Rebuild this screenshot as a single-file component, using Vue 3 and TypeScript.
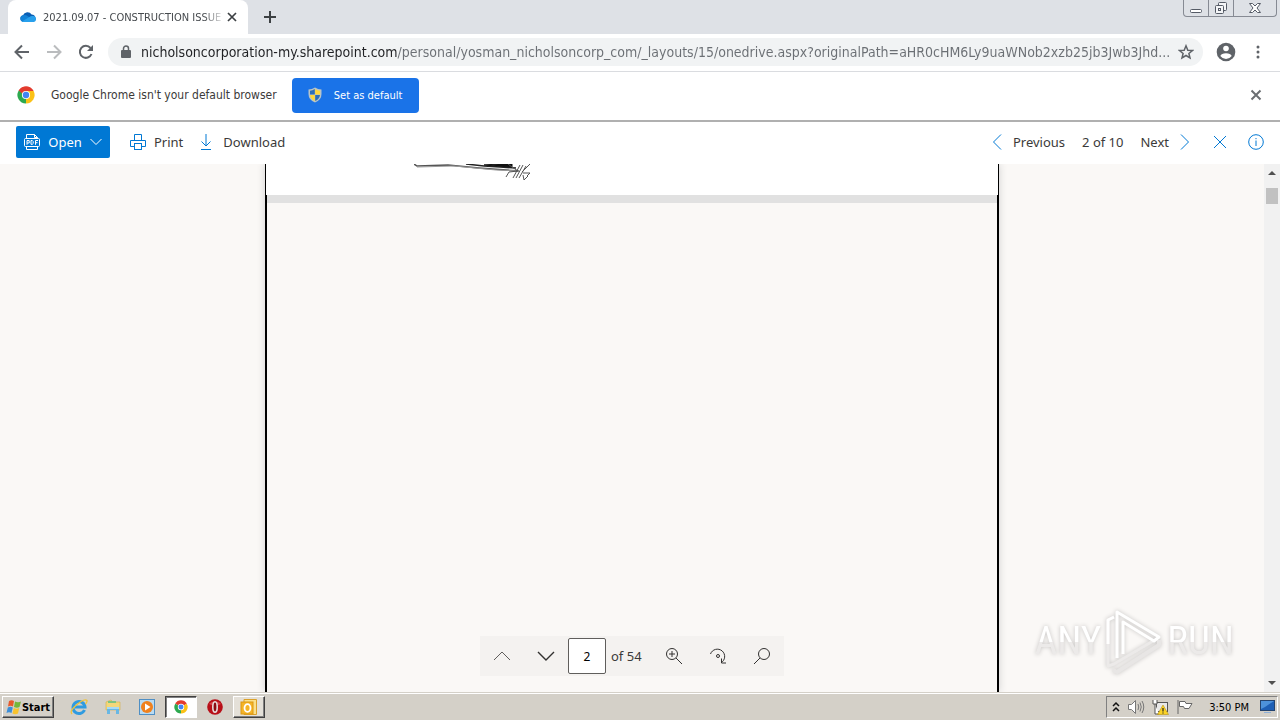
<script setup lang="ts">
import { ref } from 'vue'

const address = ref(
  'nicholsoncorporation-my.sharepoint.com/personal/yosman_nicholsoncorp_com/_layouts/15/onedrive.aspx?originalPath=aHR0cHM6Ly9uaWNob2xzb25jb3Jwb3Jhd...'
)
const page = ref('2')
</script>

<template>
  <div class="screen">
    <header class="tabstrip">
      <div class="tab">
        <svg class="cloud" viewBox="0 0 16 12" aria-hidden="true">
          <path d="M3.5 11A3.4 3.4 0 0 1 3 4.300A4.800 4.800 0 0 1 11.600 3.500A3.900 3.900 0 0 1 13 11Z" fill="#0a5fb4" />
          <path d="M3 4.300Q5.500 3.500 7.500 5L12.500 8.500L3.500 11A3.400 3.400 0 0 1 3 4.300Z" fill="#1382d6" />
          <path d="M2 10.500L9 6.200Q11 4.500 13.200 5A3 3 0 0 1 13 11H4Q2.800 11 2 10.500Z" fill="#28a0ec" />
        </svg>
        <span class="tab-title">2021.09.07 - CONSTRUCTION ISSUE</span>
        <button class="icon-btn tab-close" aria-label="Close tab">
          <svg width="10" height="10" viewBox="0 0 10 10"><path d="M1 1L9 9M9 1L1 9" stroke="#3c4043" stroke-width="1.700" /></svg>
        </button>
      </div>
      <button class="icon-btn new-tab" aria-label="New tab">
        <svg width="14" height="14" viewBox="0 0 14 14"><path d="M7 1V13M1 7H13" stroke="#3c4043" stroke-width="2" /></svg>
      </button>
      <div class="window-buttons">
        <button aria-label="Minimize"><svg width="14" height="14" viewBox="0 0 14 14"><rect x="1.500" y="8.500" width="11" height="3" rx="1" fill="#fff" stroke="#555b66" /></svg></button>
        <button aria-label="Restore"><svg width="14" height="14" viewBox="0 0 14 14" fill="#f4f5f7" stroke="#555b66"><rect x="4.500" y="1.500" width="8" height="8" rx="1" /><rect x="1.500" y="4.500" width="8" height="8" rx="1" /><rect x="4.500" y="7.500" width="2" height="2" /></svg></button>
        <button class="wide" aria-label="Close"><svg width="14" height="14" viewBox="0 0 14 14"><path d="M1.500 2.500H4.500L7 5L9.500 2.500H12.500L9 7L12.500 11.500H9.500L7 9L4.500 11.500H1.500L5 7Z" fill="#fff" stroke="#555b66" /></svg></button>
      </div>
    </header>

    <nav class="toolbar">
      <button class="icon-btn nav" aria-label="Back">
        <svg width="16" height="16" viewBox="0 0 16 16" fill="none" stroke="#5f6368" stroke-width="2"><path d="M15 8H2M8 1.500L1.500 8L8 14.500" /></svg>
      </button>
      <button class="icon-btn nav" aria-label="Forward">
        <svg width="16" height="16" viewBox="0 0 16 16" fill="none" stroke="#babcbe" stroke-width="2"><path d="M1 8H14M8 1.500L14.500 8L8 14.500" /></svg>
      </button>
      <button class="icon-btn nav" aria-label="Reload">
        <svg width="16" height="16" viewBox="0 0 16 16"><path d="M13.500 10A6 6 0 1 1 12.500 4" fill="none" stroke="#5f6368" stroke-width="2" /><path d="M15 1V7H9Z" fill="#5f6368" /></svg>
      </button>
      <div class="omnibox">
        <svg width="12" height="14" viewBox="0 0 12 14"><rect x="1" y="5" width="10" height="8" rx="1" fill="#5f6368" /><path d="M3.500 6V3.500A2.500 2.500 0 0 1 8.500 3.500V6" fill="none" stroke="#5f6368" stroke-width="1.500" /></svg>
        <input v-model="address" class="address" type="text" aria-label="Address" spellcheck="false" />
        <button class="icon-btn star" aria-label="Bookmark">
          <svg width="16" height="16" viewBox="0 0 16 16"><path d="M8 1.800L9.800 6.200L14.500 6.500L10.900 9.500L12 14L8 11.500L4 14L5.100 9.500L1.500 6.500L6.200 6.200Z" fill="none" stroke="#5f6368" stroke-width="1.500" /></svg>
        </button>
      </div>
      <button class="icon-btn profile" aria-label="Profile">
        <svg width="20" height="20" viewBox="0 0 20 20"><circle cx="10" cy="10" r="9.300" fill="#5f6368" /><circle cx="10" cy="6.500" r="2.800" fill="#fff" /><path d="M4.300 14Q5.500 11.300 10 11.300T15.700 14Q13.500 17 10 17T4.300 14Z" fill="#fff" /></svg>
      </button>
      <button class="icon-btn menu" aria-label="Menu">
        <svg width="4" height="14" viewBox="0 0 4 14" fill="#5f6368"><circle cx="2" cy="2" r="1.500" /><circle cx="2" cy="7" r="1.500" /><circle cx="2" cy="12" r="1.500" /></svg>
      </button>
    </nav>

    <section class="infobar">
      <svg class="chrome-logo" viewBox="0 0 18 18" aria-hidden="true">
        <path d="M9 9L1.600 4.700A8.500 8.500 0 0 1 16.400 4.700Z" fill="#e33b2e" />
        <path d="M9 9L16.400 4.700A8.500 8.500 0 0 1 9 17.500Z" fill="#fbc116" />
        <path d="M9 9L9 17.500A8.500 8.500 0 0 1 1.600 4.700Z" fill="#2da94f" />
        <path d="M9 5H16.500L15 9L12.500 11Z" fill="#fbc116" /><path d="M1.600 4.700L5.500 11L9 9L6 4Z" fill="#2da94f" /><path d="M1.800 4.500L5.500 8L9 5H16.500A8.500 8.500 0 0 0 1.800 4.500Z" fill="#e33b2e" />
        <circle cx="9" cy="9" r="4.100" fill="#fff" /><circle cx="9" cy="9" r="3.200" fill="#4285f4" />
      </svg>
      <span class="info-text">Google Chrome isn't your default browser</span>
      <button class="default-btn">
        <svg width="14" height="16" viewBox="0 0 14 16" aria-hidden="true">
          <path d="M7 0.500Q10 2.500 13.500 2.500V7Q13.500 13 7 15.500Q0.500 13 0.500 7V2.500Q4 2.500 7 0.500Z" fill="#b8c4c8" />
          <path d="M6.800 2Q4.500 3.500 2 3.700V7.500H6.800Z" fill="#2d6fb8" /><path d="M7.200 2Q9.500 3.500 12 3.700V7.500H7.200Z" fill="#ffd83a" />
          <path d="M2 7.900H6.800V14Q2.500 12 2 7.900Z" fill="#ffd83a" /><path d="M7.200 7.900H12Q11.500 12 7.200 14Z" fill="#2d6fb8" />
        </svg>
        <span>Set as default</span>
      </button>
      <button class="icon-btn info-close" aria-label="Dismiss">
        <svg width="12" height="12" viewBox="0 0 12 12"><path d="M1.500 1.500L10.500 10.500M10.500 1.500L1.500 10.500" stroke="#6b6e72" stroke-width="2" /></svg>
      </button>
    </section>

    <section class="commands">
      <button class="open-btn">
        <svg width="16" height="16" viewBox="0 0 16 16" fill="none" stroke="#fff"><path d="M2.500 4.500V.500H10.500L13.500 3.500V4.500M10.500 .500V3.500H13.500M2.500 12V15.500H13.500V12" /><rect x=".500" y="4.500" width="15" height="8" rx="1" /><path d="M3 10.800V6.500H5.200V9H3M7 6.500V10.300H8.300L9.200 9.500V7.500L8.300 6.500ZM11.500 10.800V6.500H14M11.500 8.700H13.500" /></svg>
        <span>Open</span>
        <svg width="12" height="8" viewBox="0 0 12 8"><path d="M.500 1L6 6.500L11.500 1" fill="none" stroke="#fff" /></svg>
      </button>
      <button class="cmd print">
        <svg width="16" height="16" viewBox="0 0 16 16" fill="none" stroke="#0078d4"><path d="M4.500 6.500V.500H11.500V6.500M4.500 12.500H.500V6.500H15.500V12.500H11.500" /><rect x="4.500" y="9.500" width="7" height="6" /></svg>
        <span>Print</span>
      </button>
      <button class="cmd spaced">
        <svg width="12" height="16" viewBox="0 0 12 16" fill="none" stroke="#0078d4"><path d="M6 0V12M1.500 7.500L6 12L10.500 7.500M1 15.500H11" /></svg>
        <span>Download</span>
      </button>
      <div class="pager">
        <button class="cmd spaced">
          <svg width="10" height="16" viewBox="0 0 10 16"><path d="M9 .500L1.500 8L9 15.500" fill="none" stroke="#0078d4" /></svg>
          <span>Previous</span>
        </button>
        <span class="count">2 of 10</span>
        <button class="cmd spaced">
          <span>Next</span>
          <svg width="10" height="16" viewBox="0 0 10 16"><path d="M1 .500L8.500 8L1 15.500" fill="none" stroke="#0078d4" /></svg>
        </button>
      </div>
      <button class="icon-btn square" aria-label="Close file">
        <svg width="14" height="14" viewBox="0 0 14 14"><path d="M1 1L13 13M13 1L1 13" stroke="#0078d4" /></svg>
      </button>
      <button class="icon-btn info" aria-label="Information">
        <svg width="16" height="16" viewBox="0 0 16 16"><circle cx="8" cy="8" r="7.300" fill="none" stroke="#0078d4" /><path d="M8 6.500V12M8 4V5.200" stroke="#0078d4" /></svg>
      </button>
    </section>

    <main class="viewer">
      <div class="canvas">
        <div class="sheets">
          <div class="sheet-end">
            <svg class="sketch" width="120" height="20" viewBox="0 0 120 20" fill="none" stroke="#333" aria-hidden="true">
              <path d="M0 0L3 2L34 1L65 4L105 7" stroke="#555" stroke-width="1.500" />
              <path d="M3 3L40 2L82 6L105 7" stroke="#999" />
              <path d="M52 0L70 2L86 3L102 4" stroke="#222" stroke-width="1.500" />
              <path d="M70 1L82 2L98 3V0H84Z" fill="#111" stroke="#111" />
              <path d="M92 13L95 8L104 7L98 3L94 0M99 14L106 1M102 14L109 1M105 14L112 2M108 8L116 0M109 9H116L113 12M109 11L110 16L114 12" stroke="#555" />
            </svg>
          </div>
          <div class="gap"></div>
          <div class="sheet"></div>
        </div>
        <div class="page-tools">
          <button aria-label="Previous page"><svg width="18" height="10" viewBox="0 0 18 10"><path d="M1 9L9 1L17 9" fill="none" stroke="#605e5c" /></svg></button>
          <button aria-label="Next page"><svg width="18" height="10" viewBox="0 0 18 10"><path d="M1 1L9 9L17 1" fill="none" stroke="#323130" stroke-width="1.400" /></svg></button>
          <input v-model="page" type="text" aria-label="Page number" />
          <span>of 54</span>
          <button aria-label="Zoom in"><svg width="18" height="18" viewBox="0 0 18 18" fill="none" stroke="#323130"><circle cx="7" cy="7" r="5.500" /><path d="M11 11L17 17M4 7H10M7 4V10" /></svg></button>
          <button aria-label="Rotate"><svg width="18" height="18" viewBox="0 0 18 18" fill="none" stroke="#323130"><path d="M1.500 7A7.300 7.300 0 1 1 12 15.800M12.500 11.500V16H17" /><circle cx="9" cy="9" r="1.500" /></svg></button>
          <button aria-label="Search"><svg width="18" height="18" viewBox="0 0 18 18" fill="none" stroke="#323130"><circle cx="11" cy="7" r="5.500" /><path d="M7 11L1 17" /></svg></button>
        </div>
      </div>
      <div class="scrollbar" aria-hidden="true">
        <svg width="8" height="18" viewBox="0 0 8 18"><path d="M0 11L4 7L8 11Z" fill="#505050" /></svg>
        <div class="thumb"></div>
        <svg class="down" width="8" height="18" viewBox="0 0 8 18"><path d="M0 7L4 11L8 7Z" fill="#505050" /></svg>
      </div>
      <div class="watermark">
        <span>ANY</span>
        <svg width="58" height="66" viewBox="0 0 58 66" aria-hidden="true" fill="none" stroke-linejoin="round">
          <path d="M8 62L12 64L54 37V32" stroke="#e8e6e5" stroke-width="4" />
          <path d="M9 9L3 12V58L9 56L48 33" stroke="#eceae9" stroke-width="3" />
          <path d="M9 9L3 12V36" stroke="#fff" stroke-width="3" />
          <path d="M12 50V4L54 29L49 33L18 14V46" stroke="#fff" stroke-width="3" />
        </svg>
        <span>RUN</span>
      </div>
    </main>

    <footer class="taskbar">
      <button class="start">
        <svg width="16" height="16" viewBox="0 0 16 16" aria-hidden="true"><path d="M3 2Q5.500 .500 8 2L7 7.500Q4.500 6 2 7.500Z" fill="#e8592b" /><path d="M9 2.500Q12 4 15 2.500L13.500 8Q11 9.500 8 8Z" fill="#75b73b" /><path d="M1.800 8.500Q4.500 7 6.800 8.500L5.500 14Q3 12.500 .500 14Z" fill="#3c8ed8" /><path d="M7.800 9Q10.500 10.500 13.200 9L12 14.500Q9 16 6.500 14.500Z" fill="#f8c32d" /></svg>
        <span>Start</span>
      </button>
      <div class="apps">
        <button aria-label="Internet Explorer"><svg width="18" height="18" viewBox="0 0 18 18" fill="none"><path d="M14.500 12A6 6 0 1 1 15 9H5" stroke="#2f9be0" stroke-width="3" /><path d="M2 16Q-1 13 7 6.500T17 2.500Q17.500 4 15.500 6" stroke="#f0c33a" stroke-width="1.300" /></svg></button>
        <button aria-label="File Explorer"><svg width="18" height="18" viewBox="0 0 18 18"><path d="M2 4L7 2L9 4H16V12H2Z" fill="#f3d77a" stroke="#d3ae4b" stroke-width=".600" /><rect x="4" y="3" width="8" height="2" fill="#7ec480" /><path d="M3 9H15V16H12V12H6V16H3Z" fill="#69b7e4" /><path d="M3 9H15V11H3Z" fill="#a6daf5" /></svg></button>
        <button aria-label="Media Player"><svg width="18" height="18" viewBox="0 0 18 18"><rect x="1.500" y="1.500" width="15" height="15" fill="#b9dbf2" stroke="#4f8fc4" /><circle cx="9" cy="9" r="6" fill="#f0811d" /><path d="M7 5.500L12.500 9L7 12.500Z" fill="#fff" /></svg></button>
        <button class="active" aria-label="Chrome"><svg width="14" height="14" viewBox="0 0 18 18"><path d="M9 9L1.600 4.700A8.500 8.500 0 0 1 16.400 4.700Z" fill="#e33b2e" /><path d="M9 9L16.400 4.700A8.500 8.500 0 0 1 9 17.500Z" fill="#fbc116" /><path d="M9 9L9 17.500A8.500 8.500 0 0 1 1.600 4.700Z" fill="#2da94f" /><circle cx="9" cy="9" r="4.100" fill="#fff" /><circle cx="9" cy="9" r="3.200" fill="#4285f4" /></svg></button>
        <button aria-label="Opera"><svg width="18" height="18" viewBox="0 0 18 18"><circle cx="9" cy="9" r="7.800" fill="#b80f18" /><path d="M3 6A7 5 0 0 1 15 6Q9 9 3 6Z" fill="#d8434b" /><ellipse cx="9" cy="9" rx="2.200" ry="5.200" fill="#8c0a12" stroke="#e6dddc" stroke-width="1.600" /></svg></button>
        <button class="raised" aria-label="Outlook"><svg width="18" height="18" viewBox="0 0 18 18"><path d="M4 1.500H16.500V16.500H4Z" fill="#fbe08a" stroke="#dba12a" /><rect x="1" y="4" width="12" height="12" fill="#f5b427" stroke="#dc9713" /><ellipse cx="7.500" cy="10" rx="3" ry="3.800" fill="none" stroke="#fff" stroke-width="1.800" /></svg></button>
      </div>
      <div class="tray">
        <svg width="8" height="12" viewBox="0 0 8 12" fill="none" stroke="#111" stroke-width="1.500"><path d="M1 5L4 2L7 5M1 10L4 7L7 10" /></svg>
        <svg class="sound" width="18" height="16" viewBox="0 0 18 16" fill="#fff" stroke="#777"><path d="M1.500 5.500H4.500L8.500 1.500V14.500L4.500 10.500H1.500Z" /><path d="M11 5Q12.500 8 11 11M13 3.500Q15.500 8 13 12.500M15 2Q18.500 8 15 14" fill="none" /></svg>
        <svg width="17" height="16" viewBox="0 0 17 16"><rect x="4.500" y="3.500" width="11" height="9" fill="#e8e8e8" stroke="#555" /><path d="M1 1V5H5V1M3 5V15H7" fill="#fff" stroke="#555" /><path d="M11 6L16.500 15.500H5.500Z" fill="#fbd325" stroke="#b99310" stroke-width=".600" /><path d="M11 9V12.500M11 13.500V14.500" stroke="#222" stroke-width="1.200" /></svg>
        <svg width="18" height="16" viewBox="0 0 18 16" fill="#fff" stroke="#666"><path d="M2 1V15" /><path d="M3.500 2.500H9L10 4.500H16L13 9.500H8.500L7.500 7.500H3.500Z" /></svg>
        <time>3:50 PM</time>
        <button class="desktop" aria-label="Show desktop"><svg width="15" height="14" viewBox="0 0 15 14"><rect x=".500" y=".500" width="14" height="10" fill="#1e5fb5" stroke="#24446f" /><path d="M1 1H14L5 7L1 9Z" fill="#4d92db" /><rect x="4" y="12" width="7" height="1" fill="#8eb0d8" /></svg></button>
      </div>
    </footer>
  </div>
</template>

<style>
body {
  margin: 0;
}
</style>

<style scoped>
.screen {
  display: flex;
  flex-direction: column;
  height: 100vh;
  overflow: hidden;
  background: #fff;
  color: #3b3a39;
  font-family: "DejaVu Sans Condensed", "DejaVu Sans", sans-serif;
  font-size: 11px;
}
.screen * {
  box-sizing: border-box;
}
button {
  display: flex;
  align-items: center;
  justify-content: center;
  padding: 0;
  border: 0;
  background: none;
  color: inherit;
  font: inherit;
  white-space: nowrap;
}
input {
  padding: 0;
  border: 0;
  outline: 0;
  font: inherit;
}
svg {
  display: block;
  flex: none;
}
.tabstrip {
  display: flex;
  flex: none;
  height: 34px;
  padding-left: 8px;
  background: #dee1e6;
}
.tab {
  display: flex;
  align-items: center;
  width: 240px;
  padding: 0 10px 0 12px;
  border-radius: 8px 8px 0 0;
  background: #fff;
}
.cloud {
  width: 16px;
  height: 12px;
}
.tab-title {
  flex: 1;
  min-width: 0;
  margin-left: 7px;
  white-space: nowrap;
  color: #45494d;
  mask-image: linear-gradient(90deg, #000 88%, transparent 100%);
}
.tab-close {
  width: 12px;
  margin-left: 1px;
}
.new-tab {
  width: 28px;
  margin-left: 8px;
}
.window-buttons {
  display: flex;
  height: 17px;
  margin: 0 3px 0 auto;
  border: 1px solid #868a93;
  border-top: 0;
  border-radius: 0 0 4px 4px;
}
.window-buttons button {
  width: 25px;
  border-right: 1px solid #868a93;
}
.window-buttons .wide {
  width: 42px;
  border-right: 0;
}
.toolbar {
  display: flex;
  flex: none;
  align-items: center;
  height: 38px;
  padding: 0 14px 2px 6px;
  border-bottom: 1px solid #dadce0;
}
.nav {
  width: 32px;
  height: 28px;
}
.omnibox {
  display: flex;
  flex: 1;
  align-items: center;
  height: 28px;
  margin-left: 6px;
  padding: 0 8px 0 12px;
  border-radius: 14px;
  background: #f1f3f4;
}
.address {
  flex: 1;
  min-width: 0;
  height: 28px;
  margin-left: 9px;
  font-size: 14px;
  background: linear-gradient(90deg, #202124 256px, #6b6f74 256px);
  background-clip: text;
  color: transparent;
}
.star {
  width: 18px;
  margin-left: 0;
}
.profile {
  width: 24px;
  margin-left: 11px;
}
.menu {
  width: 16px;
  margin-left: 12px;
}
.infobar {
  display: flex;
  flex: none;
  align-items: center;
  height: 50px;
  padding: 0 18px 2px 17px;
  border-bottom: 2px solid #b0b0b0;
}
.chrome-logo {
  width: 18px;
  height: 18px;
}
.info-text {
  margin-left: 16px;
  font-size: 12px;
  white-space: nowrap;
}
.default-btn {
  gap: 12px;
  width: 127px;
  height: 35px;
  margin-left: 15px;
  border-radius: 4px;
  background: #1a73e8;
  color: #fff;
}
.info-close {
  margin-left: auto;
}
.commands {
  display: flex;
  flex: none;
  align-items: center;
  height: 42px;
  padding: 0 16px 2px;
  font-family: "Noto Sans", sans-serif;
  font-size: 13px;
}
.open-btn {
  gap: 8px;
  width: 94px;
  height: 32px;
  border-radius: 2px;
  background: #0078d4;
  color: #fff;
}
.cmd {
  gap: 8px;
  height: 32px;
}
.cmd.spaced {
  gap: 11px;
}
.print {
  margin: 0 17px 0 20px;
}
.pager {
  display: flex;
  align-items: center;
  gap: 17px;
  margin-left: auto;
}
.square {
  width: 32px;
  height: 32px;
  margin-left: 14px;
}
.info {
  width: 16px;
  margin-left: 12px;
}
.viewer {
  position: relative;
  display: flex;
  flex: 1;
  min-height: 0;
}
.canvas {
  position: relative;
  display: flex;
  flex: 1;
  justify-content: center;
  background: #faf8f6;
}
.sheets {
  display: flex;
  flex-direction: column;
  width: 58%;
  box-shadow: 0 0 8px #d0d0d0;
  clip-path: inset(0 -10px);
}
.sheet-end {
  height: 31px;
  padding-left: 148px;
  border: solid #000;
  border-width: 0 1px;
  background: #fff;
}
.gap {
  height: 8px;
  border: solid #000;
  border-width: 0 2px;
  background: #e1e1e1;
}
.sheet {
  flex: 1;
  border: solid #000;
  border-width: 0 2px;
  background: #faf8f6;
}
.page-tools {
  position: absolute;
  bottom: 16px;
  display: flex;
  align-items: center;
  height: 40px;
  background: #f4f2f0;
  font-family: "Noto Sans", sans-serif;
  font-size: 13px;
}
.page-tools button {
  width: 44px;
  height: 40px;
}
.page-tools input {
  width: 38px;
  height: 36px;
  border: 1px solid #605e5c;
  border-radius: 2px;
  background: #fff;
  color: #000;
  font-size: 12px;
  text-align: center;
}
.page-tools span {
  width: 46px;
  padding-left: 5px;
}
.scrollbar {
  display: flex;
  flex-direction: column;
  align-items: center;
  width: 16px;
  background: #f1f1f1;
}
.thumb {
  width: 12px;
  height: 16px;
  margin-top: 6px;
  background: #c1c1c1;
}
.down {
  margin-top: auto;
}
.watermark {
  position: absolute;
  right: 46px;
  bottom: 18px;
  display: flex;
  align-items: center;
  gap: 4px;
  color: transparent;
  font-family: "Roboto Condensed", "Liberation Sans Narrow", Roboto, sans-serif;
  font-size: 39px;
  line-height: 40px;
  filter: drop-shadow(0 0 2px #c4c2c1);
}
.watermark span {
  background: linear-gradient(#fff 52%, #eceae9 52%);
  background-clip: text;
}
.taskbar {
  display: flex;
  flex: none;
  align-items: center;
  height: 28px;
  padding: 1px 2px 0;
  border-top: 1px solid #d4d0c8;
  box-shadow: inset 0 1px #fff;
  background: #d4d0c8;
  color: #000;
}
.start {
  width: 52px;
  height: 22px;
  border: 1px solid;
  border-color: #fff #404040 #404040 #fff;
  box-shadow: inset -1px -1px #808080;
  font-weight: bold;
}
.apps {
  display: flex;
  align-items: center;
  gap: 2px;
  margin-left: 9px;
}
.apps button {
  width: 32px;
  height: 22px;
}
.apps .active {
  border: 1px solid;
  border-color: #404040 #fff #fff #404040;
  box-shadow: inset 1px 1px #808080;
  background: #fff;
}
.apps .raised {
  border: 1px solid;
  border-color: #fff #404040 #404040 #fff;
  box-shadow: inset -1px -1px #808080;
  background: #e4e0d8;
}
.tray {
  display: flex;
  align-items: center;
  gap: 7px;
  height: 22px;
  margin-left: auto;
  padding: 0 2px 0 5px;
  border: 1px solid;
  border-color: #808080 #fff #fff #808080;
}
time {
  margin: 0 4px 0 8px;
  white-space: nowrap;
}
</style>
